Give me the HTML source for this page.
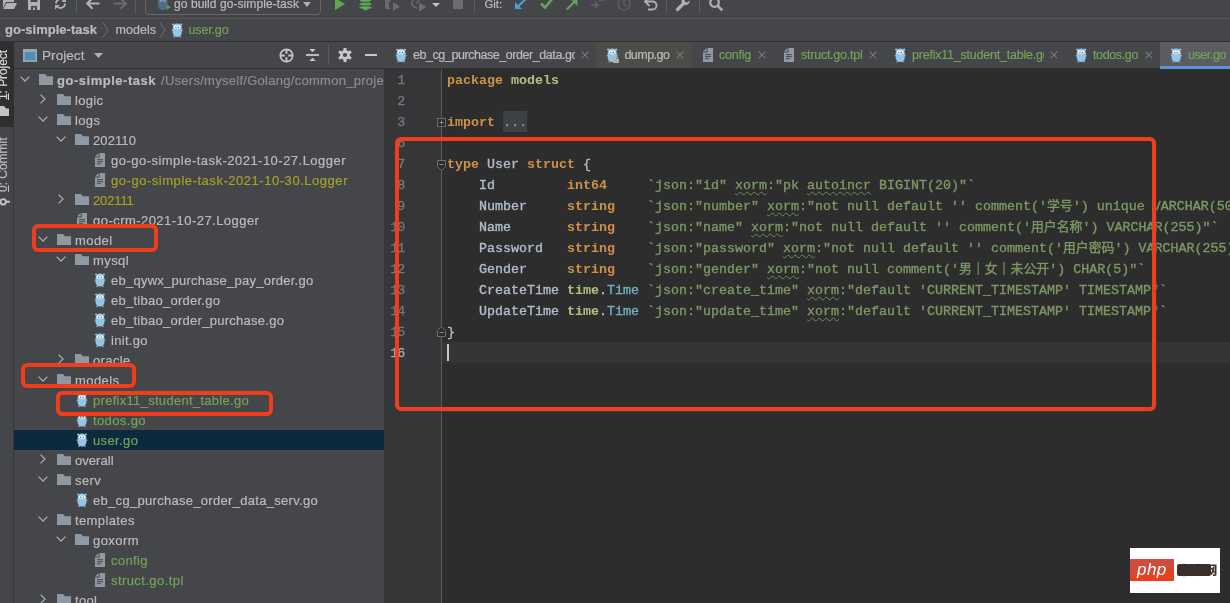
<!DOCTYPE html>
<html lang="en"><head><meta charset="utf-8"><title>GoLand - user.go</title>
<style>
html,body{margin:0;padding:0;}
body{will-change:transform;width:1230px;height:603px;overflow:hidden;position:relative;background:#444649;font-family:'Liberation Sans', 'Noto Sans CJK SC', sans-serif;}
.a{position:absolute;}
.t{position:absolute;white-space:pre;-webkit-text-stroke:0.2px currentColor;}
.code{position:absolute;left:447px;white-space:pre;font:13.33px/21px 'Liberation Mono', 'Noto Sans CJK SC', monospace;height:21px;color:#b2bccb;-webkit-text-stroke:0.35px currentColor;}
.k{color:#cf9049;font-weight:bold;-webkit-text-stroke:0;}
.p{color:#b3c17f;font-weight:bold;-webkit-text-stroke:0;}
.s{color:#7d9763;}
.ty{color:#70b0c0;}
.cj{font-size:12.9px;}
.w{text-decoration:underline wavy #6d8a55;text-decoration-thickness:1px;text-underline-offset:2px;text-decoration-skip-ink:none;}
.ln{position:absolute;left:385px;width:19.2px;text-align:right;font:13.33px/21px 'Liberation Mono', 'Noto Sans CJK SC', monospace;height:21px;color:#76787b;letter-spacing:-1px;padding-right:0px;-webkit-text-stroke:0.3px currentColor;}
.red{position:absolute;border:4px solid #f03e1d;border-radius:6px;box-sizing:border-box;box-shadow:1px 1px 1px rgba(70,70,70,.55);}
svg{position:absolute;overflow:visible;}
</style></head><body>

<div class="a" style="left:0;top:0;width:1230px;height:18px;background:#444649;"></div>
<div class="a" style="left:0;top:18px;width:1230px;height:1px;background:#555759;"></div>
<div class="a" style="left:0;top:41px;width:1230px;height:1px;background:#2f3133;"></div>
<svg style="left:2px;top:-4px" width="15" height="13" viewBox="0 0 15 13"><path d="M1 1h5l1.5 2H12v3H4L1 12z" fill="#afb1b3"/><path d="M4.6 7H15l-3 6H1.2z" fill="#afb1b3"/></svg>
<svg style="left:28px;top:-3px" width="12" height="13" viewBox="0 0 12 13"><path d="M0 0h12v13H0z M2.5 0v5h7V0z M3 9v4h6V9z" fill="#afb1b3" fill-rule="evenodd"/><rect x="5" y="10.5" width="2" height="2.5" fill="#afb1b3"/></svg>
<svg style="left:54px;top:-3px" width="13" height="13" viewBox="0 0 13 13"><path d="M11 6.5a4.5 4.5 0 0 1-8 2.8" fill="none" stroke="#afb1b3" stroke-width="1.8"/><path d="M2 6.5a4.5 4.5 0 0 1 8-2.8" fill="none" stroke="#afb1b3" stroke-width="1.8"/><path d="M1 8h4.5L1 12.5z M12 5H7.5L12 .5z" fill="#afb1b3"/></svg>
<div class="a" style="left:76px;top:0;width:1px;height:14px;background:#5a5d5f;"></div>
<svg style="left:86px;top:-3px" width="14" height="13" viewBox="0 0 14 13"><path d="M13.5 6.5H2 M6.5 1.2L1.2 6.5l5.3 5.3" fill="none" stroke="#afb1b3" stroke-width="2.1"/></svg>
<svg style="left:113px;top:-3px" width="14" height="13" viewBox="0 0 14 13"><path d="M.5 6.5H12 M7.5 1.2l5.3 5.3-5.3 5.3" fill="none" stroke="#6a6c6e" stroke-width="2.1"/></svg>
<div class="a" style="left:135px;top:0;width:1px;height:14px;background:#5a5d5f;"></div>
<div class="a" style="left:145px;top:-9px;width:176px;height:24px;border:1px solid #646668;border-radius:4px;box-sizing:border-box;"></div>
<svg style="left:158px;top:-4px" width="13" height="15" viewBox="0 0 13 15"><rect x="0" y="1" width="9.5" height="13" rx="4.2" fill="#4f6e85"/><circle cx="3" cy="4.5" r="1.5" fill="#8a99a5"/><circle cx="6.6" cy="4.5" r="1.5" fill="#8a99a5"/><path d="M8.5 8.5l4.5 2.7-4.5 2.8z" fill="#5d9a52"/></svg>
<div class="t" style="left:174px;top:-6.2px;height:20px;line-height:20px;font:normal 12px/20px 'Liberation Sans', 'Noto Sans CJK SC', sans-serif;color:#bbbbbb;letter-spacing:0.069px;">go build go-simple-task</div>
<svg style="left:303px;top:2px" width="8" height="5" viewBox="0 0 8 5"><path d="M0 0h8L4 5z" fill="#afb1b3"/></svg>
<svg style="left:335px;top:-2px" width="10" height="12" viewBox="0 0 10 12"><path d="M0 0l10 6-10 6z" fill="#5fa657"/></svg>
<svg style="left:359px;top:-2px" width="13" height="13" viewBox="0 0 13 13"><ellipse cx="6.5" cy="6.5" rx="4.3" ry="6" fill="#5fa657"/><path d="M.5 6h12M.5 9.6h12M1 2.4h11" stroke="#5fa657" stroke-width="1.7"/><path d="M2.2 4.4h8.6M2.2 7.9h8.6" stroke="#444649" stroke-width="0.9"/></svg>
<svg style="left:384px;top:-2px" width="16" height="14" viewBox="0 0 16 14"><path d="M1 0h6v3l-2 1v5l2 2H2L1 9z" fill="#6a6c6e"/><path d="M9 4l7 4.5-7 4.5z" fill="#6a6c6e"/></svg>
<svg style="left:411px;top:-2px" width="16" height="14" viewBox="0 0 16 14"><path d="M9 1A5 5 0 1 0 6 10" fill="none" stroke="#6a6c6e" stroke-width="1.5"/><path d="M5.5 5.5L8 2" stroke="#6a6c6e" stroke-width="1.3"/><path d="M8 4.5l7.5 4.5L8 13.5z" fill="#6a6c6e"/></svg>
<svg style="left:432px;top:3px" width="8" height="4" viewBox="0 0 8 4"><path d="M0 0h8L4 4z" fill="#c0c2c4"/></svg>
<div class="a" style="left:453px;top:-2px;width:10px;height:11px;background:#6a6c6e;"></div>
<div class="a" style="left:474px;top:0;width:1px;height:14px;background:#5a5d5f;"></div>
<div class="t" style="left:484.5px;top:-6px;height:20px;line-height:20px;font:normal 11.5px/20px 'Liberation Sans', 'Noto Sans CJK SC', sans-serif;color:#bbbbbb;letter-spacing:-0.098px;">Git:</div>
<svg style="left:515px;top:-2px" width="11" height="11" viewBox="0 0 11 11"><path d="M10.8 .8L3 8.5" fill="none" stroke="#4a9fdb" stroke-width="2.1"/><path d="M0 4V11h7z" fill="#4a9fdb"/></svg>
<svg style="left:540px;top:-3px" width="14" height="12" viewBox="0 0 14 12"><path d="M1 6.5l4 4L13 1" fill="none" stroke="#5fa657" stroke-width="2.6"/></svg>
<svg style="left:566px;top:-2px" width="12" height="12" viewBox="0 0 12 12"><path d="M.8 11.5L8.5 3.8" fill="none" stroke="#5fa657" stroke-width="2.1"/><path d="M4.5 1h7v7z" fill="#5fa657"/></svg>
<svg style="left:591px;top:-2px" width="14" height="12" viewBox="0 0 14 12"><path d="M8 2h6M8 2l3-3 M0 7h7l-3-3M7 7l-3 3" fill="none" stroke="#5c5e60" stroke-width="1.8"/></svg>
<svg style="left:617px;top:-3px" width="14" height="14" viewBox="0 0 14 14"><circle cx="7" cy="7" r="6" fill="none" stroke="#5c5e60" stroke-width="1.5"/><path d="M7 3v4.5l3 1.5" fill="none" stroke="#5c5e60" stroke-width="1.3"/></svg>
<svg style="left:644px;top:-3px" width="14" height="13" viewBox="0 0 14 13"><path d="M2 4.5h6.5a4 4 0 0 1 0 8H4" fill="none" stroke="#afb1b3" stroke-width="1.8"/><path d="M5.5 0L1 4.5 5.5 9" fill="none" stroke="#afb1b3" stroke-width="1.8"/></svg>
<div class="a" style="left:666px;top:0;width:1px;height:14px;background:#5a5d5f;"></div>
<svg style="left:676px;top:-3px" width="14" height="14" viewBox="0 0 14 14"><path d="M1.5 12.5L8 6" stroke="#afb1b3" stroke-width="3.2" stroke-linecap="round"/><path d="M13.5 3.5a4 4 0 1 1-3-3.3L8.5 3l.6 2 2 .5z" fill="#afb1b3"/></svg>
<div class="a" style="left:699px;top:0;width:1px;height:14px;background:#5a5d5f;"></div>
<svg style="left:709px;top:-3px" width="14" height="14" viewBox="0 0 14 14"><circle cx="5.5" cy="5.5" r="4.3" fill="none" stroke="#afb1b3" stroke-width="2.2"/><path d="M8.8 8.8L13.3 13.3" stroke="#afb1b3" stroke-width="2.6"/></svg>
<div class="t" style="left:5px;top:20px;height:20px;line-height:20px;font:bold 13px/20px 'Liberation Sans', 'Noto Sans CJK SC', sans-serif;color:#bbbbbb;letter-spacing:0.018px;">go-simple-task</div>
<svg style="left:102px;top:22px" width="7" height="16" viewBox="0 0 7 16"><path d="M1 .5L6 8 1 15.5" fill="none" stroke="#6e7072" stroke-width="1"/></svg>
<div class="t" style="left:115.5px;top:20px;height:20px;line-height:20px;font:normal 12.5px/20px 'Liberation Sans', 'Noto Sans CJK SC', sans-serif;color:#bbbbbb;letter-spacing:0.034px;">models</div>
<svg style="left:159px;top:22px" width="7" height="16" viewBox="0 0 7 16"><path d="M1 .5L6 8 1 15.5" fill="none" stroke="#6e7072" stroke-width="1"/></svg>
<svg style="left:172px;top:22.5px" width="10.5" height="14.5" viewBox="0 0 10 14"><rect x="0.6" y="0.6" width="8.8" height="13" rx="4.2" ry="4.4" fill="#90c6ea"/><circle cx="1.2" cy="1.6" r="1.1" fill="#90c6ea"/><circle cx="8.8" cy="1.6" r="1.1" fill="#90c6ea"/><circle cx="3.3" cy="3.9" r="1.7" fill="#fff"/><circle cx="6.7" cy="3.9" r="1.7" fill="#fff"/><circle cx="3.7" cy="4.1" r=".6" fill="#222"/><circle cx="6.3" cy="4.1" r=".6" fill="#222"/><rect x="4.2" y="5.3" width="1.6" height="1.3" rx=".5" fill="#e8dcc8"/><rect x="1.2" y="12.9" width="1.6" height="1" fill="#c9ad8c"/><rect x="7.2" y="12.9" width="1.6" height="1" fill="#c9ad8c"/><rect x="-.3" y="6.5" width="1" height="1.5" fill="#c9ad8c"/><rect x="9.3" y="6.5" width="1" height="1.5" fill="#c9ad8c"/></svg>
<div class="t" style="left:188.5px;top:20px;height:20px;line-height:20px;font:normal 12.5px/20px 'Liberation Sans', 'Noto Sans CJK SC', sans-serif;color:#74a25a;letter-spacing:-0.145px;">user.go</div>
<div class="a" style="left:13px;top:42px;width:1px;height:561px;background:#38393c;"></div>
<div class="a" style="left:0;top:42px;width:14px;height:85px;background:#2d2f30;"></div>
<div class="t" style="left:-4.4px;top:100px;height:14px;line-height:14px;font:12px/14px 'Liberation Sans', 'Noto Sans CJK SC', sans-serif;color:#d6d6d6;letter-spacing:-0.070px;transform-origin:0 0;transform:rotate(-90deg);"><u>1</u>: Project</div>
<svg style="left:-5px;top:105.5px" width="14" height="10" viewBox="0 0 14 10"><path d="M0 0h14v10H0z" fill="#c4c4c4"/><path d="M9 0h5v2.5H11z" fill="#2d2f30"/></svg>
<div class="t" style="left:-3.6px;top:192px;height:14px;line-height:14px;font:12px/14px 'Liberation Sans', 'Noto Sans CJK SC', sans-serif;color:#bcbcbc;letter-spacing:-0.021px;transform-origin:0 0;transform:rotate(-90deg);"><u>0</u>: Commit</div>
<svg style="left:-2px;top:197px" width="12" height="10" viewBox="0 0 12 10"><circle cx="5.2" cy="4.8" r="2.7" fill="none" stroke="#c2c2c2" stroke-width="1.9"/><path d="M0 4.8h2.5M7.9 4.8H12" stroke="#c2c2c2" stroke-width="1.9"/></svg>
<div class="a" style="left:14px;top:68px;width:370px;height:1px;background:#323436;"></div>
<svg style="left:23px;top:49px" width="14" height="13" viewBox="0 0 14 13"><rect x=".9" y=".9" width="12.2" height="11.2" fill="#4d8fb8" stroke="#9aa4ad" stroke-width="1.8"/><rect x="0" y="0" width="14" height="3" fill="#9aa4ad"/></svg>
<div class="t" style="left:42px;top:45.5px;height:20px;line-height:20px;font:normal 13.5px/20px 'Liberation Sans', 'Noto Sans CJK SC', sans-serif;color:#bbbbbb;letter-spacing:0.067px;">Project</div>
<svg style="left:94px;top:53px" width="9" height="5" viewBox="0 0 9 5"><path d="M0 0h9L4.5 5z" fill="#afb1b3"/></svg>
<svg style="left:278.5px;top:47.5px" width="15" height="15" viewBox="0 0 15 15"><circle cx="7.5" cy="7.5" r="6.2" fill="none" stroke="#c6c8ca" stroke-width="1.7"/><path d="M7.5 1.5v4.2M7.5 9.3v4.2M1.5 7.5h4.2M9.3 7.5h4.2" stroke="#c6c8ca" stroke-width="1.9"/></svg>
<svg style="left:305.5px;top:48px" width="13" height="14" viewBox="0 0 13 14"><path d="M0 7h13" stroke="#c6c8ca" stroke-width="1.8"/><path d="M3.3 1h6.4L6.5 4.2z M3.3 13h6.4L6.5 9.8z" fill="#c6c8ca"/></svg>
<div class="a" style="left:328px;top:45px;width:1px;height:20px;background:#5a5c5f;"></div>
<svg style="left:338px;top:48px" width="14" height="14" viewBox="0 0 14 14"><circle cx="7" cy="7" r="3.5" fill="none" stroke="#c6c8ca" stroke-width="2.8"/><g stroke="#c6c8ca" stroke-width="3"><path d="M7 0v3M7 11v3"/><path d="M7 0v3M7 11v3" transform="rotate(60 7 7)"/><path d="M7 0v3M7 11v3" transform="rotate(120 7 7)"/></g></svg>
<div class="a" style="left:364.7px;top:54px;width:12.5px;height:2px;background:#c6c8ca;"></div>
<div class="a" style="left:384px;top:42px;width:1px;height:27px;background:#3a3c3e;"></div>
<div class="a" style="left:14px;top:430px;width:370px;height:20px;background:#0d293e;"></div>
<svg style="left:20.3px;top:75.8px" width="10" height="6" viewBox="0 0 10 6"><path d="M.6 .6L5 5l4.4-4.4" fill="none" stroke="#a8aaac" stroke-width="1.3"/></svg>
<svg style="left:39px;top:74px" width="14" height="11" viewBox="0 0 14 11"><path d="M0 0h6l1.8 2.3H14V11H0z" fill="#8f99a3"/></svg>
<div class="t" style="left:57px;top:71px;height:20px;line-height:20px;font:bold 13px/20px 'Liberation Sans', 'Noto Sans CJK SC', sans-serif;color:#bbbbbb;letter-spacing:0.518px;">go-simple-task</div>
<svg style="left:40.4px;top:93.8px" width="6" height="10" viewBox="0 0 6 10"><path d="M.6 .6L5 5 .6 9.4" fill="none" stroke="#a8aaac" stroke-width="1.3"/></svg>
<svg style="left:57px;top:94px" width="14" height="11" viewBox="0 0 14 11"><path d="M0 0h6l1.8 2.3H14V11H0z" fill="#8f99a3"/></svg>
<div class="t" style="left:75px;top:91px;height:20px;line-height:20px;font:normal 13px/20px 'Liberation Sans', 'Noto Sans CJK SC', sans-serif;color:#bbbbbb;letter-spacing:0.332px;">logic</div>
<svg style="left:38.4px;top:115.8px" width="10" height="6" viewBox="0 0 10 6"><path d="M.6 .6L5 5l4.4-4.4" fill="none" stroke="#a8aaac" stroke-width="1.3"/></svg>
<svg style="left:57px;top:114px" width="14" height="11" viewBox="0 0 14 11"><path d="M0 0h6l1.8 2.3H14V11H0z" fill="#8f99a3"/></svg>
<div class="t" style="left:75px;top:111px;height:20px;line-height:20px;font:normal 13px/20px 'Liberation Sans', 'Noto Sans CJK SC', sans-serif;color:#bbbbbb;letter-spacing:0.370px;">logs</div>
<svg style="left:56.4px;top:135.8px" width="10" height="6" viewBox="0 0 10 6"><path d="M.6 .6L5 5l4.4-4.4" fill="none" stroke="#a8aaac" stroke-width="1.3"/></svg>
<svg style="left:75px;top:134px" width="14" height="11" viewBox="0 0 14 11"><path d="M0 0h6l1.8 2.3H14V11H0z" fill="#8f99a3"/></svg>
<div class="t" style="left:93px;top:131px;height:20px;line-height:20px;font:normal 13px/20px 'Liberation Sans', 'Noto Sans CJK SC', sans-serif;color:#bbbbbb;letter-spacing:0.096px;">202110</div>
<svg style="left:95px;top:152.5px" width="10" height="14" viewBox="0 0 10 14"><path d="M4.6 0H10v14H0V4.6h4.6z" fill="#8f99a3"/><path d="M0 3.6L3.6 0v3.6z" fill="#8f99a3"/><path d="M2 6.7h6M2 8.7h6M2 10.7h4" stroke="#444649" stroke-width="1"/></svg>
<div class="t" style="left:111px;top:151px;height:20px;line-height:20px;font:normal 13px/20px 'Liberation Sans', 'Noto Sans CJK SC', sans-serif;color:#bbbbbb;letter-spacing:0.479px;">go-go-simple-task-2021-10-27.Logger</div>
<svg style="left:95px;top:172.5px" width="10" height="14" viewBox="0 0 10 14"><path d="M4.6 0H10v14H0V4.6h4.6z" fill="#8f99a3"/><path d="M0 3.6L3.6 0v3.6z" fill="#8f99a3"/><path d="M2 6.7h6M2 8.7h6M2 10.7h4" stroke="#444649" stroke-width="1"/></svg>
<div class="t" style="left:111px;top:171px;height:20px;line-height:20px;font:normal 13px/20px 'Liberation Sans', 'Noto Sans CJK SC', sans-serif;color:#a5a028;letter-spacing:0.536px;">go-go-simple-task-2021-10-30.Logger</div>
<svg style="left:58.4px;top:193.8px" width="6" height="10" viewBox="0 0 6 10"><path d="M.6 .6L5 5 .6 9.4" fill="none" stroke="#a8aaac" stroke-width="1.3"/></svg>
<svg style="left:75px;top:194px" width="14" height="11" viewBox="0 0 14 11"><path d="M0 0h6l1.8 2.3H14V11H0z" fill="#8f99a3"/></svg>
<div class="t" style="left:93px;top:191px;height:20px;line-height:20px;font:normal 13px/20px 'Liberation Sans', 'Noto Sans CJK SC', sans-serif;color:#a5a028;letter-spacing:-0.126px;">202111</div>
<svg style="left:77px;top:212.5px" width="10" height="14" viewBox="0 0 10 14"><path d="M4.6 0H10v14H0V4.6h4.6z" fill="#8f99a3"/><path d="M0 3.6L3.6 0v3.6z" fill="#8f99a3"/><path d="M2 6.7h6M2 8.7h6M2 10.7h4" stroke="#444649" stroke-width="1"/></svg>
<div class="t" style="left:93px;top:211px;height:20px;line-height:20px;font:normal 13px/20px 'Liberation Sans', 'Noto Sans CJK SC', sans-serif;color:#bbbbbb;letter-spacing:0.459px;">go-crm-2021-10-27.Logger</div>
<svg style="left:38.4px;top:235.8px" width="10" height="6" viewBox="0 0 10 6"><path d="M.6 .6L5 5l4.4-4.4" fill="none" stroke="#a8aaac" stroke-width="1.3"/></svg>
<svg style="left:57px;top:234px" width="14" height="11" viewBox="0 0 14 11"><path d="M0 0h6l1.8 2.3H14V11H0z" fill="#8f99a3"/></svg>
<div class="t" style="left:75px;top:231px;height:20px;line-height:20px;font:normal 13px/20px 'Liberation Sans', 'Noto Sans CJK SC', sans-serif;color:#bbbbbb;letter-spacing:0.439px;">model</div>
<svg style="left:56.4px;top:255.8px" width="10" height="6" viewBox="0 0 10 6"><path d="M.6 .6L5 5l4.4-4.4" fill="none" stroke="#a8aaac" stroke-width="1.3"/></svg>
<svg style="left:75px;top:254px" width="14" height="11" viewBox="0 0 14 11"><path d="M0 0h6l1.8 2.3H14V11H0z" fill="#8f99a3"/></svg>
<div class="t" style="left:93px;top:251px;height:20px;line-height:20px;font:normal 13px/20px 'Liberation Sans', 'Noto Sans CJK SC', sans-serif;color:#bbbbbb;letter-spacing:0.421px;">mysql</div>
<svg style="left:95px;top:272.5px" width="10" height="14" viewBox="0 0 10 14"><rect x="0.6" y="0.6" width="8.8" height="13" rx="4.2" ry="4.4" fill="#90c6ea"/><circle cx="1.2" cy="1.6" r="1.1" fill="#90c6ea"/><circle cx="8.8" cy="1.6" r="1.1" fill="#90c6ea"/><circle cx="3.3" cy="3.9" r="1.7" fill="#fff"/><circle cx="6.7" cy="3.9" r="1.7" fill="#fff"/><circle cx="3.7" cy="4.1" r=".6" fill="#222"/><circle cx="6.3" cy="4.1" r=".6" fill="#222"/><rect x="4.2" y="5.3" width="1.6" height="1.3" rx=".5" fill="#e8dcc8"/><rect x="1.2" y="12.9" width="1.6" height="1" fill="#c9ad8c"/><rect x="7.2" y="12.9" width="1.6" height="1" fill="#c9ad8c"/><rect x="-.3" y="6.5" width="1" height="1.5" fill="#c9ad8c"/><rect x="9.3" y="6.5" width="1" height="1.5" fill="#c9ad8c"/></svg>
<div class="t" style="left:111px;top:271px;height:20px;line-height:20px;font:normal 13px/20px 'Liberation Sans', 'Noto Sans CJK SC', sans-serif;color:#bbbbbb;letter-spacing:0.250px;">eb_qywx_purchase_pay_order.go</div>
<svg style="left:95px;top:292.5px" width="10" height="14" viewBox="0 0 10 14"><rect x="0.6" y="0.6" width="8.8" height="13" rx="4.2" ry="4.4" fill="#90c6ea"/><circle cx="1.2" cy="1.6" r="1.1" fill="#90c6ea"/><circle cx="8.8" cy="1.6" r="1.1" fill="#90c6ea"/><circle cx="3.3" cy="3.9" r="1.7" fill="#fff"/><circle cx="6.7" cy="3.9" r="1.7" fill="#fff"/><circle cx="3.7" cy="4.1" r=".6" fill="#222"/><circle cx="6.3" cy="4.1" r=".6" fill="#222"/><rect x="4.2" y="5.3" width="1.6" height="1.3" rx=".5" fill="#e8dcc8"/><rect x="1.2" y="12.9" width="1.6" height="1" fill="#c9ad8c"/><rect x="7.2" y="12.9" width="1.6" height="1" fill="#c9ad8c"/><rect x="-.3" y="6.5" width="1" height="1.5" fill="#c9ad8c"/><rect x="9.3" y="6.5" width="1" height="1.5" fill="#c9ad8c"/></svg>
<div class="t" style="left:111px;top:291px;height:20px;line-height:20px;font:normal 13px/20px 'Liberation Sans', 'Noto Sans CJK SC', sans-serif;color:#bbbbbb;letter-spacing:0.258px;">eb_tibao_order.go</div>
<svg style="left:95px;top:312.5px" width="10" height="14" viewBox="0 0 10 14"><rect x="0.6" y="0.6" width="8.8" height="13" rx="4.2" ry="4.4" fill="#90c6ea"/><circle cx="1.2" cy="1.6" r="1.1" fill="#90c6ea"/><circle cx="8.8" cy="1.6" r="1.1" fill="#90c6ea"/><circle cx="3.3" cy="3.9" r="1.7" fill="#fff"/><circle cx="6.7" cy="3.9" r="1.7" fill="#fff"/><circle cx="3.7" cy="4.1" r=".6" fill="#222"/><circle cx="6.3" cy="4.1" r=".6" fill="#222"/><rect x="4.2" y="5.3" width="1.6" height="1.3" rx=".5" fill="#e8dcc8"/><rect x="1.2" y="12.9" width="1.6" height="1" fill="#c9ad8c"/><rect x="7.2" y="12.9" width="1.6" height="1" fill="#c9ad8c"/><rect x="-.3" y="6.5" width="1" height="1.5" fill="#c9ad8c"/><rect x="9.3" y="6.5" width="1" height="1.5" fill="#c9ad8c"/></svg>
<div class="t" style="left:111px;top:311px;height:20px;line-height:20px;font:normal 13px/20px 'Liberation Sans', 'Noto Sans CJK SC', sans-serif;color:#bbbbbb;letter-spacing:0.267px;">eb_tibao_order_purchase.go</div>
<svg style="left:95px;top:332.5px" width="10" height="14" viewBox="0 0 10 14"><rect x="0.6" y="0.6" width="8.8" height="13" rx="4.2" ry="4.4" fill="#90c6ea"/><circle cx="1.2" cy="1.6" r="1.1" fill="#90c6ea"/><circle cx="8.8" cy="1.6" r="1.1" fill="#90c6ea"/><circle cx="3.3" cy="3.9" r="1.7" fill="#fff"/><circle cx="6.7" cy="3.9" r="1.7" fill="#fff"/><circle cx="3.7" cy="4.1" r=".6" fill="#222"/><circle cx="6.3" cy="4.1" r=".6" fill="#222"/><rect x="4.2" y="5.3" width="1.6" height="1.3" rx=".5" fill="#e8dcc8"/><rect x="1.2" y="12.9" width="1.6" height="1" fill="#c9ad8c"/><rect x="7.2" y="12.9" width="1.6" height="1" fill="#c9ad8c"/><rect x="-.3" y="6.5" width="1" height="1.5" fill="#c9ad8c"/><rect x="9.3" y="6.5" width="1" height="1.5" fill="#c9ad8c"/></svg>
<div class="t" style="left:111px;top:331px;height:20px;line-height:20px;font:normal 13px/20px 'Liberation Sans', 'Noto Sans CJK SC', sans-serif;color:#bbbbbb;letter-spacing:0.307px;">init.go</div>
<svg style="left:58.4px;top:353.8px" width="6" height="10" viewBox="0 0 6 10"><path d="M.6 .6L5 5 .6 9.4" fill="none" stroke="#a8aaac" stroke-width="1.3"/></svg>
<svg style="left:75px;top:354px" width="14" height="11" viewBox="0 0 14 11"><path d="M0 0h6l1.8 2.3H14V11H0z" fill="#8f99a3"/></svg>
<div class="t" style="left:93px;top:351px;height:20px;line-height:20px;font:normal 13px/20px 'Liberation Sans', 'Noto Sans CJK SC', sans-serif;color:#bbbbbb;letter-spacing:0.366px;">oracle</div>
<svg style="left:38.4px;top:375.8px" width="10" height="6" viewBox="0 0 10 6"><path d="M.6 .6L5 5l4.4-4.4" fill="none" stroke="#a8aaac" stroke-width="1.3"/></svg>
<svg style="left:57px;top:374px" width="14" height="11" viewBox="0 0 14 11"><path d="M0 0h6l1.8 2.3H14V11H0z" fill="#8f99a3"/></svg>
<div class="t" style="left:75px;top:371px;height:20px;line-height:20px;font:normal 13px/20px 'Liberation Sans', 'Noto Sans CJK SC', sans-serif;color:#bbbbbb;letter-spacing:0.433px;">models</div>
<svg style="left:77px;top:392.5px" width="10" height="14" viewBox="0 0 10 14"><rect x="0.6" y="0.6" width="8.8" height="13" rx="4.2" ry="4.4" fill="#90c6ea"/><circle cx="1.2" cy="1.6" r="1.1" fill="#90c6ea"/><circle cx="8.8" cy="1.6" r="1.1" fill="#90c6ea"/><circle cx="3.3" cy="3.9" r="1.7" fill="#fff"/><circle cx="6.7" cy="3.9" r="1.7" fill="#fff"/><circle cx="3.7" cy="4.1" r=".6" fill="#222"/><circle cx="6.3" cy="4.1" r=".6" fill="#222"/><rect x="4.2" y="5.3" width="1.6" height="1.3" rx=".5" fill="#e8dcc8"/><rect x="1.2" y="12.9" width="1.6" height="1" fill="#c9ad8c"/><rect x="7.2" y="12.9" width="1.6" height="1" fill="#c9ad8c"/><rect x="-.3" y="6.5" width="1" height="1.5" fill="#c9ad8c"/><rect x="9.3" y="6.5" width="1" height="1.5" fill="#c9ad8c"/></svg>
<div class="t" style="left:93px;top:391px;height:20px;line-height:20px;font:normal 13px/20px 'Liberation Sans', 'Noto Sans CJK SC', sans-serif;color:#74a25a;letter-spacing:0.294px;">prefix11_student_table.go</div>
<svg style="left:77px;top:412.5px" width="10" height="14" viewBox="0 0 10 14"><rect x="0.6" y="0.6" width="8.8" height="13" rx="4.2" ry="4.4" fill="#90c6ea"/><circle cx="1.2" cy="1.6" r="1.1" fill="#90c6ea"/><circle cx="8.8" cy="1.6" r="1.1" fill="#90c6ea"/><circle cx="3.3" cy="3.9" r="1.7" fill="#fff"/><circle cx="6.7" cy="3.9" r="1.7" fill="#fff"/><circle cx="3.7" cy="4.1" r=".6" fill="#222"/><circle cx="6.3" cy="4.1" r=".6" fill="#222"/><rect x="4.2" y="5.3" width="1.6" height="1.3" rx=".5" fill="#e8dcc8"/><rect x="1.2" y="12.9" width="1.6" height="1" fill="#c9ad8c"/><rect x="7.2" y="12.9" width="1.6" height="1" fill="#c9ad8c"/><rect x="-.3" y="6.5" width="1" height="1.5" fill="#c9ad8c"/><rect x="9.3" y="6.5" width="1" height="1.5" fill="#c9ad8c"/></svg>
<div class="t" style="left:93px;top:411px;height:20px;line-height:20px;font:normal 13px/20px 'Liberation Sans', 'Noto Sans CJK SC', sans-serif;color:#74a25a;letter-spacing:0.387px;">todos.go</div>
<svg style="left:77px;top:432.5px" width="10" height="14" viewBox="0 0 10 14"><rect x="0.6" y="0.6" width="8.8" height="13" rx="4.2" ry="4.4" fill="#90c6ea"/><circle cx="1.2" cy="1.6" r="1.1" fill="#90c6ea"/><circle cx="8.8" cy="1.6" r="1.1" fill="#90c6ea"/><circle cx="3.3" cy="3.9" r="1.7" fill="#fff"/><circle cx="6.7" cy="3.9" r="1.7" fill="#fff"/><circle cx="3.7" cy="4.1" r=".6" fill="#222"/><circle cx="6.3" cy="4.1" r=".6" fill="#222"/><rect x="4.2" y="5.3" width="1.6" height="1.3" rx=".5" fill="#e8dcc8"/><rect x="1.2" y="12.9" width="1.6" height="1" fill="#c9ad8c"/><rect x="7.2" y="12.9" width="1.6" height="1" fill="#c9ad8c"/><rect x="-.3" y="6.5" width="1" height="1.5" fill="#c9ad8c"/><rect x="9.3" y="6.5" width="1" height="1.5" fill="#c9ad8c"/></svg>
<div class="t" style="left:93px;top:431px;height:20px;line-height:20px;font:normal 13px/20px 'Liberation Sans', 'Noto Sans CJK SC', sans-serif;color:#74a25a;letter-spacing:0.378px;">user.go</div>
<svg style="left:40.4px;top:453.8px" width="6" height="10" viewBox="0 0 6 10"><path d="M.6 .6L5 5 .6 9.4" fill="none" stroke="#a8aaac" stroke-width="1.3"/></svg>
<svg style="left:57px;top:454px" width="14" height="11" viewBox="0 0 14 11"><path d="M0 0h6l1.8 2.3H14V11H0z" fill="#8f99a3"/></svg>
<div class="t" style="left:75px;top:451px;height:20px;line-height:20px;font:normal 13px/20px 'Liberation Sans', 'Noto Sans CJK SC', sans-serif;color:#bbbbbb;letter-spacing:0.043px;">overall</div>
<svg style="left:38.4px;top:475.8px" width="10" height="6" viewBox="0 0 10 6"><path d="M.6 .6L5 5l4.4-4.4" fill="none" stroke="#a8aaac" stroke-width="1.3"/></svg>
<svg style="left:57px;top:474px" width="14" height="11" viewBox="0 0 14 11"><path d="M0 0h6l1.8 2.3H14V11H0z" fill="#8f99a3"/></svg>
<div class="t" style="left:75px;top:471px;height:20px;line-height:20px;font:normal 13px/20px 'Liberation Sans', 'Noto Sans CJK SC', sans-serif;color:#bbbbbb;letter-spacing:0.381px;">serv</div>
<svg style="left:77px;top:492.5px" width="10" height="14" viewBox="0 0 10 14"><rect x="0.6" y="0.6" width="8.8" height="13" rx="4.2" ry="4.4" fill="#90c6ea"/><circle cx="1.2" cy="1.6" r="1.1" fill="#90c6ea"/><circle cx="8.8" cy="1.6" r="1.1" fill="#90c6ea"/><circle cx="3.3" cy="3.9" r="1.7" fill="#fff"/><circle cx="6.7" cy="3.9" r="1.7" fill="#fff"/><circle cx="3.7" cy="4.1" r=".6" fill="#222"/><circle cx="6.3" cy="4.1" r=".6" fill="#222"/><rect x="4.2" y="5.3" width="1.6" height="1.3" rx=".5" fill="#e8dcc8"/><rect x="1.2" y="12.9" width="1.6" height="1" fill="#c9ad8c"/><rect x="7.2" y="12.9" width="1.6" height="1" fill="#c9ad8c"/><rect x="-.3" y="6.5" width="1" height="1.5" fill="#c9ad8c"/><rect x="9.3" y="6.5" width="1" height="1.5" fill="#c9ad8c"/></svg>
<div class="t" style="left:93px;top:491px;height:20px;line-height:20px;font:normal 13px/20px 'Liberation Sans', 'Noto Sans CJK SC', sans-serif;color:#bbbbbb;letter-spacing:0.299px;">eb_cg_purchase_order_data_serv.go</div>
<svg style="left:38.4px;top:515.8px" width="10" height="6" viewBox="0 0 10 6"><path d="M.6 .6L5 5l4.4-4.4" fill="none" stroke="#a8aaac" stroke-width="1.3"/></svg>
<svg style="left:57px;top:514px" width="14" height="11" viewBox="0 0 14 11"><path d="M0 0h6l1.8 2.3H14V11H0z" fill="#8f99a3"/></svg>
<div class="t" style="left:75px;top:511px;height:20px;line-height:20px;font:normal 13px/20px 'Liberation Sans', 'Noto Sans CJK SC', sans-serif;color:#bbbbbb;letter-spacing:0.388px;">templates</div>
<svg style="left:56.4px;top:535.8px" width="10" height="6" viewBox="0 0 10 6"><path d="M.6 .6L5 5l4.4-4.4" fill="none" stroke="#a8aaac" stroke-width="1.3"/></svg>
<svg style="left:75px;top:534px" width="14" height="11" viewBox="0 0 14 11"><path d="M0 0h6l1.8 2.3H14V11H0z" fill="#8f99a3"/></svg>
<div class="t" style="left:93px;top:531px;height:20px;line-height:20px;font:normal 13px/20px 'Liberation Sans', 'Noto Sans CJK SC', sans-serif;color:#bbbbbb;letter-spacing:0.448px;">goxorm</div>
<svg style="left:95px;top:552.5px" width="10" height="14" viewBox="0 0 10 14"><path d="M4.6 0H10v14H0V4.6h4.6z" fill="#8f99a3"/><path d="M0 3.6L3.6 0v3.6z" fill="#8f99a3"/><path d="M2 6.7h6M2 8.7h6M2 10.7h4" stroke="#444649" stroke-width="1"/></svg>
<div class="t" style="left:111px;top:551px;height:20px;line-height:20px;font:normal 13px/20px 'Liberation Sans', 'Noto Sans CJK SC', sans-serif;color:#74a25a;letter-spacing:0.359px;">config</div>
<svg style="left:95px;top:572.5px" width="10" height="14" viewBox="0 0 10 14"><path d="M4.6 0H10v14H0V4.6h4.6z" fill="#8f99a3"/><path d="M0 3.6L3.6 0v3.6z" fill="#8f99a3"/><path d="M2 6.7h6M2 8.7h6M2 10.7h4" stroke="#444649" stroke-width="1"/></svg>
<div class="t" style="left:111px;top:571px;height:20px;line-height:20px;font:normal 13px/20px 'Liberation Sans', 'Noto Sans CJK SC', sans-serif;color:#74a25a;letter-spacing:0.423px;">struct.go.tpl</div>
<svg style="left:40.4px;top:593.8px" width="6" height="10" viewBox="0 0 6 10"><path d="M.6 .6L5 5 .6 9.4" fill="none" stroke="#a8aaac" stroke-width="1.3"/></svg>
<svg style="left:57px;top:594px" width="14" height="11" viewBox="0 0 14 11"><path d="M0 0h6l1.8 2.3H14V11H0z" fill="#8f99a3"/></svg>
<div class="t" style="left:75px;top:591px;height:20px;line-height:20px;font:normal 13px/20px 'Liberation Sans', 'Noto Sans CJK SC', sans-serif;color:#bbbbbb;letter-spacing:0.325px;">tool</div>
<div class="t" style="left:161px;top:71px;height:20px;line-height:20px;font:normal 13px/20px 'Liberation Sans', 'Noto Sans CJK SC', sans-serif;color:#8a8c8e;letter-spacing:0.277px;width:223px;overflow:hidden;">/Users/myself/Golang/common_proje</div>
<div class="a" style="left:384px;top:42px;width:846px;height:561px;background:#2d2d2d;"></div>
<div class="a" style="left:384px;top:42px;width:846px;height:26px;background:#444649;"></div>
<div class="a" style="left:384px;top:68px;width:846px;height:1px;background:#323232;"></div>
<div class="a" style="left:596px;top:42px;width:96px;height:26px;background:#4c4c48;"></div>
<div class="a" style="left:1160px;top:42px;width:70px;height:26px;background:#5b5c5f;"></div>
<div class="a" style="left:1160px;top:66px;width:70px;height:3px;background:#5e93d5;"></div>
<svg style="left:395.8px;top:47.5px" width="10.2" height="14.5" viewBox="0 0 10 14"><rect x="0.6" y="0.6" width="8.8" height="13" rx="4.2" ry="4.4" fill="#90c6ea"/><circle cx="1.2" cy="1.6" r="1.1" fill="#90c6ea"/><circle cx="8.8" cy="1.6" r="1.1" fill="#90c6ea"/><circle cx="3.3" cy="3.9" r="1.7" fill="#fff"/><circle cx="6.7" cy="3.9" r="1.7" fill="#fff"/><circle cx="3.7" cy="4.1" r=".6" fill="#222"/><circle cx="6.3" cy="4.1" r=".6" fill="#222"/><rect x="4.2" y="5.3" width="1.6" height="1.3" rx=".5" fill="#e8dcc8"/><rect x="1.2" y="12.9" width="1.6" height="1" fill="#c9ad8c"/><rect x="7.2" y="12.9" width="1.6" height="1" fill="#c9ad8c"/><rect x="-.3" y="6.5" width="1" height="1.5" fill="#c9ad8c"/><rect x="9.3" y="6.5" width="1" height="1.5" fill="#c9ad8c"/></svg>
<div class="t" style="left:413px;top:45px;height:20px;line-height:20px;font:normal 12.5px/20px 'Liberation Sans', 'Noto Sans CJK SC', sans-serif;color:#bbbbbb;letter-spacing:-0.437px;width:162px;overflow:hidden;">eb_cg_purchase_order_data.go</div>
<svg style="left:581px;top:51px" width="8" height="8" viewBox="0 0 8 8"><path d="M.7 .7l6.6 6.6M7.3 .7L.7 7.3" stroke="#787a7e" stroke-width="1.1"/></svg>
<svg style="left:607px;top:47.5px" width="10.5" height="14.5" viewBox="0 0 10 14"><rect x="0.6" y="0.6" width="8.8" height="13" rx="4.2" ry="4.4" fill="#90c6ea"/><circle cx="1.2" cy="1.6" r="1.1" fill="#90c6ea"/><circle cx="8.8" cy="1.6" r="1.1" fill="#90c6ea"/><circle cx="3.3" cy="3.9" r="1.7" fill="#fff"/><circle cx="6.7" cy="3.9" r="1.7" fill="#fff"/><circle cx="3.7" cy="4.1" r=".6" fill="#222"/><circle cx="6.3" cy="4.1" r=".6" fill="#222"/><rect x="4.2" y="5.3" width="1.6" height="1.3" rx=".5" fill="#e8dcc8"/><rect x="1.2" y="12.9" width="1.6" height="1" fill="#c9ad8c"/><rect x="7.2" y="12.9" width="1.6" height="1" fill="#c9ad8c"/><rect x="-.3" y="6.5" width="1" height="1.5" fill="#c9ad8c"/><rect x="9.3" y="6.5" width="1" height="1.5" fill="#c9ad8c"/></svg>
<svg style="left:613px;top:57px" width="6" height="6" viewBox="0 0 6 6"><rect x="0" y="2" width="6" height="4" fill="#b0b2b4"/><path d="M1.3 2V1.2a1.7 1.7 0 0 1 3.4 0V2" fill="none" stroke="#b0b2b4" stroke-width="1"/></svg>
<div class="t" style="left:624.4px;top:45px;height:20px;line-height:20px;font:normal 12.5px/20px 'Liberation Sans', 'Noto Sans CJK SC', sans-serif;color:#bbbbbb;letter-spacing:-0.522px;">dump.go</div>
<svg style="left:675.7px;top:51px" width="8" height="8" viewBox="0 0 8 8"><path d="M.7 .7l6.6 6.6M7.3 .7L.7 7.3" stroke="#787a7e" stroke-width="1.1"/></svg>
<svg style="left:702.5px;top:48px" width="10" height="14" viewBox="0 0 10 14"><path d="M4.6 0H10v14H0V4.6h4.6z" fill="#8f99a3"/><path d="M0 3.6L3.6 0v3.6z" fill="#8f99a3"/><path d="M2 6.7h6M2 8.7h6M2 10.7h4" stroke="#444649" stroke-width="1"/></svg>
<div class="t" style="left:719px;top:45px;height:20px;line-height:20px;font:normal 12.5px/20px 'Liberation Sans', 'Noto Sans CJK SC', sans-serif;color:#74a25a;letter-spacing:-0.227px;">config</div>
<svg style="left:757.6px;top:51px" width="8" height="8" viewBox="0 0 8 8"><path d="M.7 .7l6.6 6.6M7.3 .7L.7 7.3" stroke="#787a7e" stroke-width="1.1"/></svg>
<svg style="left:784px;top:48px" width="10" height="14" viewBox="0 0 10 14"><path d="M4.6 0H10v14H0V4.6h4.6z" fill="#8f99a3"/><path d="M0 3.6L3.6 0v3.6z" fill="#8f99a3"/><path d="M2 6.7h6M2 8.7h6M2 10.7h4" stroke="#444649" stroke-width="1"/></svg>
<div class="t" style="left:801px;top:45px;height:20px;line-height:20px;font:normal 12.5px/20px 'Liberation Sans', 'Noto Sans CJK SC', sans-serif;color:#74a25a;letter-spacing:-0.240px;width:61.5px;overflow:hidden;">struct.go.tpl</div>
<svg style="left:868.7px;top:51px" width="8" height="8" viewBox="0 0 8 8"><path d="M.7 .7l6.6 6.6M7.3 .7L.7 7.3" stroke="#787a7e" stroke-width="1.1"/></svg>
<svg style="left:895px;top:47.5px" width="10.5" height="14.5" viewBox="0 0 10 14"><rect x="0.6" y="0.6" width="8.8" height="13" rx="4.2" ry="4.4" fill="#90c6ea"/><circle cx="1.2" cy="1.6" r="1.1" fill="#90c6ea"/><circle cx="8.8" cy="1.6" r="1.1" fill="#90c6ea"/><circle cx="3.3" cy="3.9" r="1.7" fill="#fff"/><circle cx="6.7" cy="3.9" r="1.7" fill="#fff"/><circle cx="3.7" cy="4.1" r=".6" fill="#222"/><circle cx="6.3" cy="4.1" r=".6" fill="#222"/><rect x="4.2" y="5.3" width="1.6" height="1.3" rx=".5" fill="#e8dcc8"/><rect x="1.2" y="12.9" width="1.6" height="1" fill="#c9ad8c"/><rect x="7.2" y="12.9" width="1.6" height="1" fill="#c9ad8c"/><rect x="-.3" y="6.5" width="1" height="1.5" fill="#c9ad8c"/><rect x="9.3" y="6.5" width="1" height="1.5" fill="#c9ad8c"/></svg>
<div class="t" style="left:912px;top:45px;height:20px;line-height:20px;font:normal 12.5px/20px 'Liberation Sans', 'Noto Sans CJK SC', sans-serif;color:#74a25a;letter-spacing:-0.217px;width:132px;overflow:hidden;">prefix11_student_table.go</div>
<svg style="left:1050px;top:51px" width="8" height="8" viewBox="0 0 8 8"><path d="M.7 .7l6.6 6.6M7.3 .7L.7 7.3" stroke="#787a7e" stroke-width="1.1"/></svg>
<svg style="left:1076px;top:47.5px" width="10.5" height="14.5" viewBox="0 0 10 14"><rect x="0.6" y="0.6" width="8.8" height="13" rx="4.2" ry="4.4" fill="#90c6ea"/><circle cx="1.2" cy="1.6" r="1.1" fill="#90c6ea"/><circle cx="8.8" cy="1.6" r="1.1" fill="#90c6ea"/><circle cx="3.3" cy="3.9" r="1.7" fill="#fff"/><circle cx="6.7" cy="3.9" r="1.7" fill="#fff"/><circle cx="3.7" cy="4.1" r=".6" fill="#222"/><circle cx="6.3" cy="4.1" r=".6" fill="#222"/><rect x="4.2" y="5.3" width="1.6" height="1.3" rx=".5" fill="#e8dcc8"/><rect x="1.2" y="12.9" width="1.6" height="1" fill="#c9ad8c"/><rect x="7.2" y="12.9" width="1.6" height="1" fill="#c9ad8c"/><rect x="-.3" y="6.5" width="1" height="1.5" fill="#c9ad8c"/><rect x="9.3" y="6.5" width="1" height="1.5" fill="#c9ad8c"/></svg>
<div class="t" style="left:1093px;top:45px;height:20px;line-height:20px;font:normal 12.5px/20px 'Liberation Sans', 'Noto Sans CJK SC', sans-serif;color:#74a25a;letter-spacing:-0.371px;">todos.go</div>
<svg style="left:1145px;top:51px" width="8" height="8" viewBox="0 0 8 8"><path d="M.7 .7l6.6 6.6M7.3 .7L.7 7.3" stroke="#787a7e" stroke-width="1.1"/></svg>
<svg style="left:1171px;top:47.5px" width="10.5" height="14.5" viewBox="0 0 10 14"><rect x="0.6" y="0.6" width="8.8" height="13" rx="4.2" ry="4.4" fill="#90c6ea"/><circle cx="1.2" cy="1.6" r="1.1" fill="#90c6ea"/><circle cx="8.8" cy="1.6" r="1.1" fill="#90c6ea"/><circle cx="3.3" cy="3.9" r="1.7" fill="#fff"/><circle cx="6.7" cy="3.9" r="1.7" fill="#fff"/><circle cx="3.7" cy="4.1" r=".6" fill="#222"/><circle cx="6.3" cy="4.1" r=".6" fill="#222"/><rect x="4.2" y="5.3" width="1.6" height="1.3" rx=".5" fill="#e8dcc8"/><rect x="1.2" y="12.9" width="1.6" height="1" fill="#c9ad8c"/><rect x="7.2" y="12.9" width="1.6" height="1" fill="#c9ad8c"/><rect x="-.3" y="6.5" width="1" height="1.5" fill="#c9ad8c"/><rect x="9.3" y="6.5" width="1" height="1.5" fill="#c9ad8c"/></svg>
<div class="t" style="left:1188px;top:45px;height:20px;line-height:20px;font:normal 12.5px/20px 'Liberation Sans', 'Noto Sans CJK SC', sans-serif;color:#74a25a;letter-spacing:-0.431px;">user.go</div>
<div class="a" style="left:384px;top:69px;width:57px;height:534px;background:#353638;"></div>
<div class="a" style="left:441px;top:69px;width:1px;height:534px;background:#5a5a5a;"></div>
<div class="a" style="left:442px;top:342px;width:788px;height:21px;background:#353535;"></div>
<div class="a" style="left:385px;top:342px;width:56px;height:21px;background:#35373a;"></div>
<div class="ln" style="top:70px">1</div>
<div class="code" style="top:70px"><span class="k">package</span> <span class="p">models</span></div>
<div class="ln" style="top:91px">2</div>
<div class="ln" style="top:112px">3</div>
<div class="code" style="top:112px"><span class="k">import</span> <span style="display:inline-block;height:21px;vertical-align:top;position:relative;top:-1px;line-height:23px;background:#3e4143;color:#8e9092;">...</span></div>
<div class="ln" style="top:133px">6</div>
<div class="ln" style="top:154px">7</div>
<div class="code" style="top:154px"><span class="k">type</span> User <span class="k">struct</span> {</div>
<div class="ln" style="top:175px">8</div>
<div class="code" style="top:175px">    Id         <span class="k">int64</span>     <span class="s">`json:"id" <span class="w">xorm</span>:"pk <span class="w">autoincr</span> BIGINT(20)"`</span></div>
<div class="ln" style="top:196px">9</div>
<div class="code" style="top:196px">    Number     <span class="k">string</span>    <span class="s">`json:"number" <span class="w">xorm</span>:"not null default '' comment('<span class="cj">学号</span>') unique VARCHAR(50) index"`</span></div>
<div class="ln" style="top:217px">10</div>
<div class="code" style="top:217px">    Name       <span class="k">string</span>    <span class="s">`json:"name" <span class="w">xorm</span>:"not null default '' comment('<span class="cj">用户名称</span>') VARCHAR(255)"`</span></div>
<div class="ln" style="top:238px">11</div>
<div class="code" style="top:238px">    Password   <span class="k">string</span>    <span class="s">`json:"password" <span class="w">xorm</span>:"not null default '' comment('<span class="cj">用户密码</span>') VARCHAR(255)"`</span></div>
<div class="ln" style="top:259px">12</div>
<div class="code" style="top:259px">    Gender     <span class="k">string</span>    <span class="s">`json:"gender" <span class="w">xorm</span>:"not null comment('<span class="cj">男｜女｜未公开</span>') CHAR(5)"`</span></div>
<div class="ln" style="top:280px">13</div>
<div class="code" style="top:280px">    CreateTime <span class="p">time</span>.<span class="ty">Time</span> <span class="s">`json:"create_time" <span class="w">xorm</span>:"default 'CURRENT_TIMESTAMP' TIMESTAMP"`</span></div>
<div class="ln" style="top:301px">14</div>
<div class="code" style="top:301px">    UpdateTime <span class="p">time</span>.<span class="ty">Time</span> <span class="s">`json:"update_time" <span class="w">xorm</span>:"default 'CURRENT_TIMESTAMP' TIMESTAMP"`</span></div>
<div class="ln" style="top:322px">15</div>
<div class="code" style="top:322px">}</div>
<div class="ln" style="top:343px;color:#a9abad">16</div>
<div class="a" style="left:447px;top:344px;width:2px;height:17px;background:#c8c8c8;"></div>
<svg style="left:437px;top:118px" width="9" height="9" viewBox="0 0 9 9"><rect x=".5" y=".5" width="8" height="8" fill="#2d2d2d" stroke="#6c6e70"/><path d="M2.5 4.5h4M4.5 2.5v4" stroke="#8a8c8e" stroke-width="1"/></svg>
<svg style="left:437px;top:160px" width="9" height="11" viewBox="0 0 9 11"><path d="M.5 .5h8v6l-4 4-4-4z" fill="#2d2d2d" stroke="#6c6e70"/><path d="M2.5 4.5h4" stroke="#8a8c8e" stroke-width="1"/></svg>
<svg style="left:437px;top:326px" width="9" height="11" viewBox="0 0 9 11"><path d="M.5 10.5h8v-6l-4-4-4 4z" fill="#2d2d2d" stroke="#6c6e70"/><path d="M2.5 6.5h4" stroke="#8a8c8e" stroke-width="1"/></svg>
<div class="red" style="left:395px;top:137px;width:761px;height:274px;"></div>
<div class="red" style="left:32px;top:224px;width:126px;height:28px;"></div>
<div class="red" style="left:21px;top:363px;width:115px;height:25px;"></div>
<div class="red" style="left:56px;top:391px;width:217px;height:25px;"></div>
<div class="a" style="left:1130px;top:548px;width:90px;height:45px;background:#fff;"></div>
<div class="a" style="left:1130px;top:559px;width:44px;height:22px;background:linear-gradient(172deg,#d14a3e 0%,#d14a3e 55%,#e8401f 56%,#e8401f 100%);"></div>
<div class="t" style="left:1137px;top:559px;height:22px;line-height:21px;font:italic 17px/21px 'Liberation Sans', 'Noto Sans CJK SC', sans-serif;color:#fff;letter-spacing:0.45px;-webkit-text-stroke:0;">php</div>
<div class="a" style="left:1177px;top:564px;width:34px;height:12px;background:#3a302b;border-radius:2px;"></div>
<div class="t" style="left:1178px;top:562.5px;height:14px;font:bold 12px/14px 'Noto Sans CJK SC', sans-serif;color:#3a302b;letter-spacing:1.6px;">中文网</div>
</body></html>
